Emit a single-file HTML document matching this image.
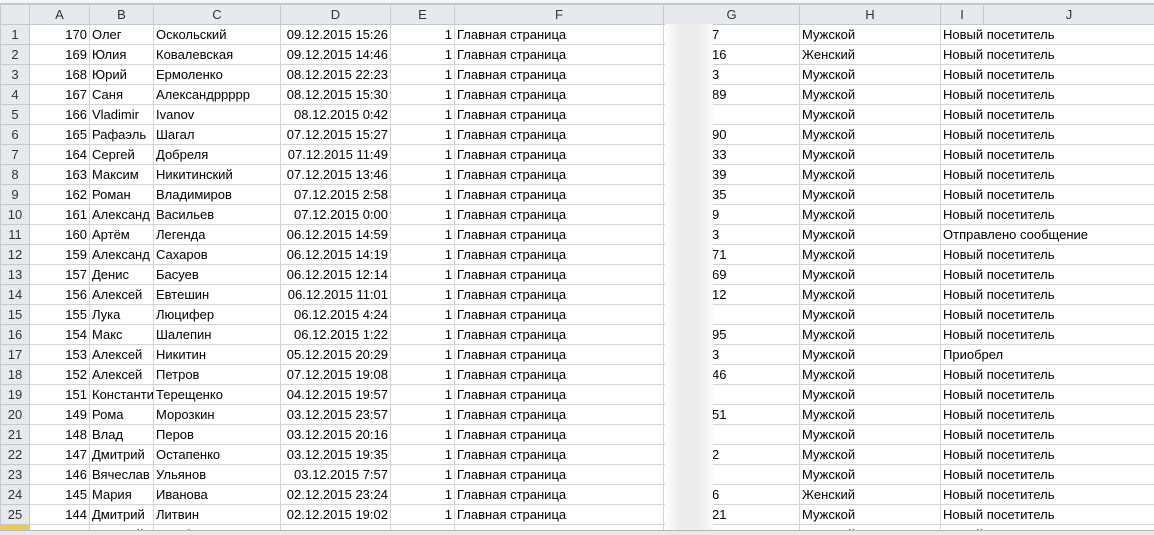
<!DOCTYPE html><html><head><meta charset="utf-8"><style>
html,body{margin:0;width:1154px;height:535px;overflow:hidden}
body{background:#fff;font-family:"Liberation Sans",sans-serif;font-size:13px;color:#000;position:relative}
.wrap{position:absolute;left:0;top:0;width:1154px;height:530px;overflow:hidden}
.top{position:absolute;left:0;top:0;width:1154px;height:3px;background:#f4f4f4;border-bottom:1px solid #c5c5c5}
table{position:absolute;left:0;top:4px;border-collapse:collapse;table-layout:fixed;width:1154px}
td{border:1px solid #d4d4d4;height:19px;padding:0 2px;white-space:nowrap;overflow:hidden;line-height:19px}
tr.h td{background:#e6e9ee;text-align:center;border-color:#c5c9cf;height:19px;color:#333}
td.r{background:#e6e9ee;text-align:center;border-color:#c5c9cf;color:#333}
.n{text-align:right}
.blur{position:absolute;left:665px;top:24px;width:48px;height:506px;background:linear-gradient(90deg,#fff,#ededed 30%,#ededed 75%,#fafafa)}
.bot{position:absolute;left:0;top:530px;width:1154px;height:5px;background:#e8e8e8;border-top:1px solid #b8b8b8;z-index:5}
</style></head><body>
<div class="wrap">
<div class="top"></div>
<table>
<colgroup><col style="width:29px"><col style="width:60px"><col style="width:64px"><col style="width:127px"><col style="width:110px"><col style="width:64px"><col style="width:209px"><col style="width:136px"><col style="width:141px"><col style="width:43px"><col style="width:171px"></colgroup>
<tr class="h"><td></td><td>A</td><td>B</td><td>C</td><td>D</td><td>E</td><td>F</td><td>G</td><td>H</td><td>I</td><td>J</td></tr>
<tr><td class="r">1</td><td class="n">170</td><td>Олег</td><td>Оскольский</td><td class="n">09.12.2015 15:26</td><td class="n">1</td><td>Главная страница</td><td style="padding-left:48px">7</td><td>Мужской</td><td colspan="2">Новый посетитель</td></tr>
<tr><td class="r">2</td><td class="n">169</td><td>Юлия</td><td>Ковалевская</td><td class="n">09.12.2015 14:46</td><td class="n">1</td><td>Главная страница</td><td style="padding-left:48px">16</td><td>Женский</td><td colspan="2">Новый посетитель</td></tr>
<tr><td class="r">3</td><td class="n">168</td><td>Юрий</td><td>Ермоленко</td><td class="n">08.12.2015 22:23</td><td class="n">1</td><td>Главная страница</td><td style="padding-left:48px">3</td><td>Мужской</td><td colspan="2">Новый посетитель</td></tr>
<tr><td class="r">4</td><td class="n">167</td><td>Саня</td><td>Александрpppp</td><td class="n">08.12.2015 15:30</td><td class="n">1</td><td>Главная страница</td><td style="padding-left:48px">89</td><td>Мужской</td><td colspan="2">Новый посетитель</td></tr>
<tr><td class="r">5</td><td class="n">166</td><td>Vladimir</td><td>Ivanov</td><td class="n">08.12.2015 0:42</td><td class="n">1</td><td>Главная страница</td><td style="padding-left:48px"></td><td>Мужской</td><td colspan="2">Новый посетитель</td></tr>
<tr><td class="r">6</td><td class="n">165</td><td>Рафаэль</td><td>Шагал</td><td class="n">07.12.2015 15:27</td><td class="n">1</td><td>Главная страница</td><td style="padding-left:48px">90</td><td>Мужской</td><td colspan="2">Новый посетитель</td></tr>
<tr><td class="r">7</td><td class="n">164</td><td>Сергей</td><td>Добреля</td><td class="n">07.12.2015 11:49</td><td class="n">1</td><td>Главная страница</td><td style="padding-left:48px">33</td><td>Мужской</td><td colspan="2">Новый посетитель</td></tr>
<tr><td class="r">8</td><td class="n">163</td><td>Максим</td><td>Никитинский</td><td class="n">07.12.2015 13:46</td><td class="n">1</td><td>Главная страница</td><td style="padding-left:48px">39</td><td>Мужской</td><td colspan="2">Новый посетитель</td></tr>
<tr><td class="r">9</td><td class="n">162</td><td>Роман</td><td>Владимиров</td><td class="n">07.12.2015 2:58</td><td class="n">1</td><td>Главная страница</td><td style="padding-left:48px">35</td><td>Мужской</td><td colspan="2">Новый посетитель</td></tr>
<tr><td class="r">10</td><td class="n">161</td><td>Александ</td><td>Васильев</td><td class="n">07.12.2015 0:00</td><td class="n">1</td><td>Главная страница</td><td style="padding-left:48px">9</td><td>Мужской</td><td colspan="2">Новый посетитель</td></tr>
<tr><td class="r">11</td><td class="n">160</td><td>Артём</td><td>Легенда</td><td class="n">06.12.2015 14:59</td><td class="n">1</td><td>Главная страница</td><td style="padding-left:48px">3</td><td>Мужской</td><td colspan="2">Отправлено сообщение</td></tr>
<tr><td class="r">12</td><td class="n">159</td><td>Александ</td><td>Сахаров</td><td class="n">06.12.2015 14:19</td><td class="n">1</td><td>Главная страница</td><td style="padding-left:48px">71</td><td>Мужской</td><td colspan="2">Новый посетитель</td></tr>
<tr><td class="r">13</td><td class="n">157</td><td>Денис</td><td>Басуев</td><td class="n">06.12.2015 12:14</td><td class="n">1</td><td>Главная страница</td><td style="padding-left:48px">69</td><td>Мужской</td><td colspan="2">Новый посетитель</td></tr>
<tr><td class="r">14</td><td class="n">156</td><td>Алексей</td><td>Евтешин</td><td class="n">06.12.2015 11:01</td><td class="n">1</td><td>Главная страница</td><td style="padding-left:48px">12</td><td>Мужской</td><td colspan="2">Новый посетитель</td></tr>
<tr><td class="r">15</td><td class="n">155</td><td>Лука</td><td>Люцифер</td><td class="n">06.12.2015 4:24</td><td class="n">1</td><td>Главная страница</td><td style="padding-left:48px"></td><td>Мужской</td><td colspan="2">Новый посетитель</td></tr>
<tr><td class="r">16</td><td class="n">154</td><td>Макс</td><td>Шалепин</td><td class="n">06.12.2015 1:22</td><td class="n">1</td><td>Главная страница</td><td style="padding-left:48px">95</td><td>Мужской</td><td colspan="2">Новый посетитель</td></tr>
<tr><td class="r">17</td><td class="n">153</td><td>Алексей</td><td>Никитин</td><td class="n">05.12.2015 20:29</td><td class="n">1</td><td>Главная страница</td><td style="padding-left:48px">3</td><td>Мужской</td><td colspan="2">Приобрел</td></tr>
<tr><td class="r">18</td><td class="n">152</td><td>Алексей</td><td>Петров</td><td class="n">07.12.2015 19:08</td><td class="n">1</td><td>Главная страница</td><td style="padding-left:48px">46</td><td>Мужской</td><td colspan="2">Новый посетитель</td></tr>
<tr><td class="r">19</td><td class="n">151</td><td>Константи</td><td>Терещенко</td><td class="n">04.12.2015 19:57</td><td class="n">1</td><td>Главная страница</td><td style="padding-left:48px"></td><td>Мужской</td><td colspan="2">Новый посетитель</td></tr>
<tr><td class="r">20</td><td class="n">149</td><td>Рома</td><td>Морозкин</td><td class="n">03.12.2015 23:57</td><td class="n">1</td><td>Главная страница</td><td style="padding-left:48px">51</td><td>Мужской</td><td colspan="2">Новый посетитель</td></tr>
<tr><td class="r">21</td><td class="n">148</td><td>Влад</td><td>Перов</td><td class="n">03.12.2015 20:16</td><td class="n">1</td><td>Главная страница</td><td style="padding-left:48px"></td><td>Мужской</td><td colspan="2">Новый посетитель</td></tr>
<tr><td class="r">22</td><td class="n">147</td><td>Дмитрий</td><td>Остапенко</td><td class="n">03.12.2015 19:35</td><td class="n">1</td><td>Главная страница</td><td style="padding-left:48px">2</td><td>Мужской</td><td colspan="2">Новый посетитель</td></tr>
<tr><td class="r">23</td><td class="n">146</td><td>Вячеслав</td><td>Ульянов</td><td class="n">03.12.2015 7:57</td><td class="n">1</td><td>Главная страница</td><td style="padding-left:48px"></td><td>Мужской</td><td colspan="2">Новый посетитель</td></tr>
<tr><td class="r">24</td><td class="n">145</td><td>Мария</td><td>Иванова</td><td class="n">02.12.2015 23:24</td><td class="n">1</td><td>Главная страница</td><td style="padding-left:48px">6</td><td>Женский</td><td colspan="2">Новый посетитель</td></tr>
<tr><td class="r">25</td><td class="n">144</td><td>Дмитрий</td><td>Литвин</td><td class="n">02.12.2015 19:02</td><td class="n">1</td><td>Главная страница</td><td style="padding-left:48px">21</td><td>Мужской</td><td colspan="2">Новый посетитель</td></tr>
<tr><td class="r" style="background:#f5c842">26</td><td class="n">143</td><td>Василий</td><td>Голубев</td><td class="n">02.12.2015 18:30</td><td class="n">1</td><td>Главная страница</td><td>########</td><td>Мужской</td><td colspan="2">Новый посетитель</td></tr>
</table>
<div class="blur"></div>
</div>
<div class="bot"></div>
</body></html>
